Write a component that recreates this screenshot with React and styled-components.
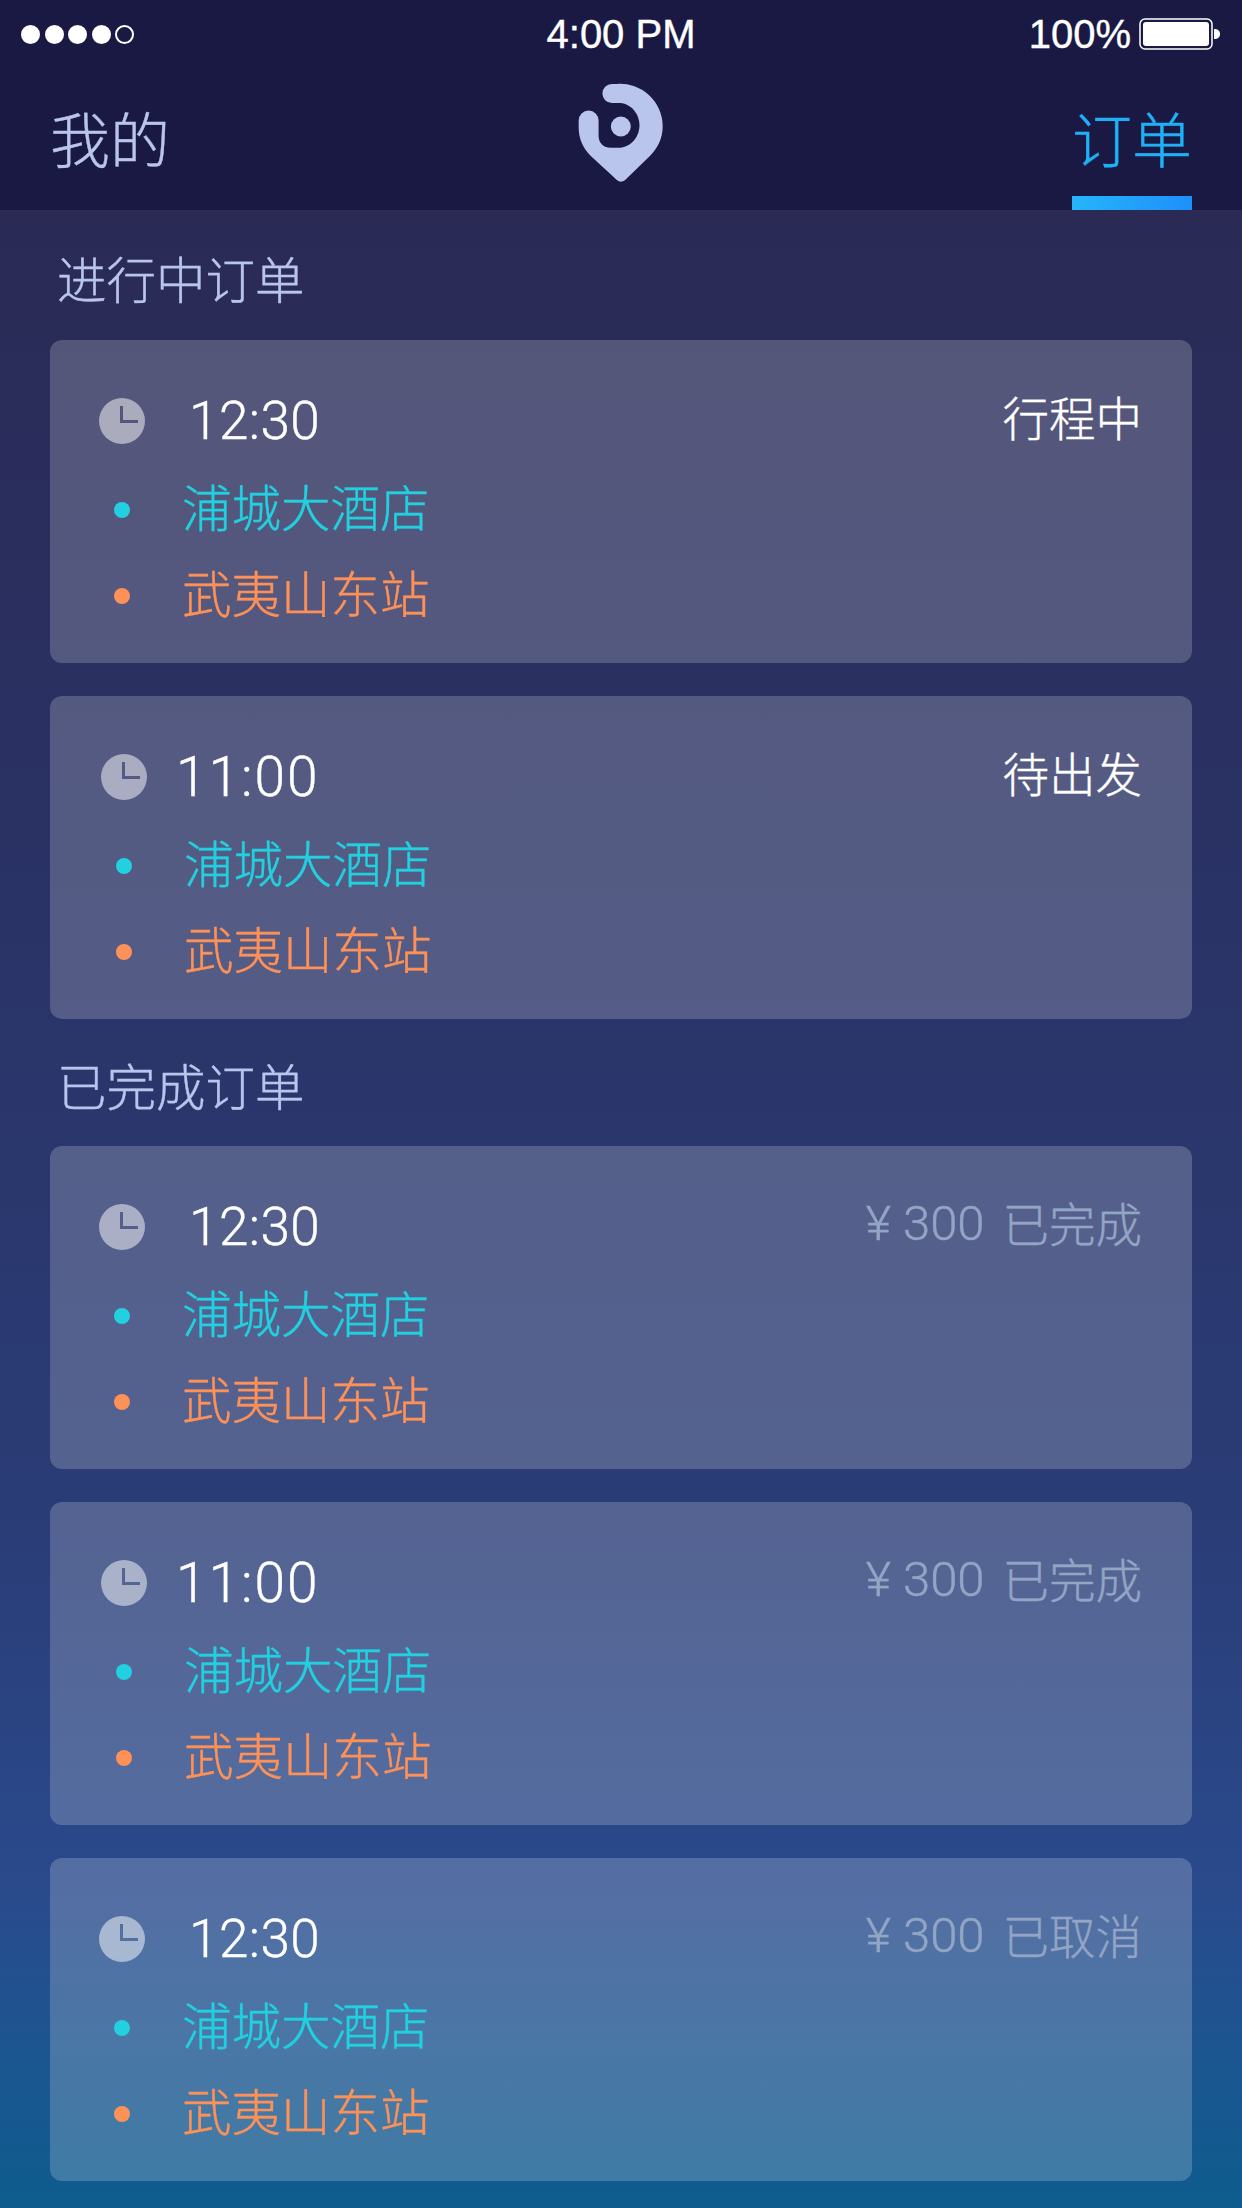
import React from 'react';
import styled, { createGlobalStyle } from 'styled-components';

const GlobalStyle = createGlobalStyle`
  html, body {
    margin: 0;
    padding: 0;
    background: #0f5a8e;
  }
`;

const Page = styled.div`
  width: 1242px;
  height: 2208px;
  overflow: hidden;
  display: flex;
  flex-direction: column;
  font-family: "Noto Sans CJK SC", sans-serif;
  font-weight: 300;
  -webkit-text-stroke: 0.4px;
  background: #1a1944;
`;

const Header = styled.header`
  height: 210px;
  flex: none;
  display: flex;
  flex-direction: column;
  background: #1a1944;
`;

const StatusBar = styled.div`
  height: 68px;
  flex: none;
  display: grid;
  grid-template-columns: 1fr auto 1fr;
  align-items: center;
  padding: 0 21px;
  color: #fff;
  font-family: "Liberation Sans", sans-serif;
  font-weight: 400;
  font-size: 40px;
`;

const Signal = styled.div`
  display: flex;
  gap: 4.5px;
`;

const SignalDot = styled.span`
  width: 19px;
  height: 19px;
  border-radius: 50%;
  box-sizing: border-box;
  border: 2px solid #fff;
  background: ${p => (p.$on ? '#fff' : 'transparent')};
`;

const BatteryWrap = styled.div`
  justify-self: end;
  display: flex;
  align-items: center;
  gap: 8px;
`;

const NavBar = styled.nav`
  flex: 1;
  display: flex;
  justify-content: space-between;
  padding: 0 50px;
`;

const NavItem = styled.div`
  width: 120px;
  height: 142px;
  box-sizing: border-box;
  display: flex;
  align-items: center;
  justify-content: center;
  padding-top: 8px;
  font-size: 60px;
  white-space: nowrap;
  color: ${p => (p.$active ? '#1fb0f5' : '#b9c5ec')};
  border-bottom: 14px solid transparent;
  border-image: ${p => (p.$active ? 'linear-gradient(90deg, #26b5fb, #1e8ffb) 1' : 'none')};
`;

const Logo = styled.svg`
  width: 88px;
  height: 102px;
  margin-top: 14px;
`;

const Content = styled.main`
  flex: 1;
  display: flex;
  flex-direction: column;
  padding: 0 50px;
  background: linear-gradient(180deg, #2a2a55 0%, #2a3366 35%, #2a3c76 65%, #2a4a8c 84%, #1c5590 92%, #0e5c8e 100%);
`;

const SectionTitle = styled.h2`
  margin: 0;
  height: ${p => (p.$first ? 130 : 127)}px;
  display: flex;
  align-items: center;
  padding: ${p => (p.$first ? 5 : 3)}px 7px 0;
  box-sizing: border-box;
  font-size: 49.5px;
  font-weight: 300;
  color: #b9c5ec;
`;

const CardList = styled.div`
  display: flex;
  flex-direction: column;
  gap: 33px;
`;

const Card = styled.article`
  height: 323px;
  box-sizing: border-box;
  border-radius: 12px;
  background: rgba(255, 255, 255, 0.2);
  padding: 56px 50px 0 ${p => 49 + p.$shift}px;
  display: flex;
  flex-direction: column;
`;

const TopRow = styled.div`
  display: flex;
  justify-content: space-between;
  height: 50px;
  align-items: center;
`;

const TimeGroup = styled.div`
  display: flex;
  align-items: center;
`;

const ClockIcon = styled.svg`
  width: 46px;
  height: 46px;
  flex: none;
`;

const TimeText = styled.span`
  margin-left: ${p => p.$gap}px;
  font-family: Roboto, sans-serif;
  font-weight: 300;
  font-size: ${p => p.$size}px;
  letter-spacing: ${p => p.$spacing}px;
  color: #fff;
`;

const Status = styled.span`
  display: flex;
  align-items: center;
  gap: 18px;
  font-size: 46.5px;
  color: ${p => (p.$muted ? '#93a5c4' : '#fff')};
  position: relative;
  top: -6px;
`;

const Price = styled.span`
  font-family: Roboto, sans-serif;
  font-weight: 300;
  font-size: 49px;
  position: relative;
  top: 2px;
`;

const Stop = styled.div`
  display: flex;
  align-items: center;
  height: 86px;
  font-size: 49.5px;
  color: ${p => p.$color};
  margin-top: ${p => p.$offset}px;
`;

const StopDot = styled.span`
  width: 16px;
  height: 16px;
  border-radius: 50%;
  margin: 0 52px 0 15px;
  background: ${p => p.$color};
`;

const StopLabel = styled.span`
  padding-bottom: 9px;
`;

const Clock = () => (
  <ClockIcon viewBox="0 0 46 46">
    <mask id="clock-hands">
      <rect width="46" height="46" fill="#fff" />
      <path d="M22.5 8 V23.5 H39" fill="none" stroke="#000" strokeWidth="3" />
    </mask>
    <circle cx="23" cy="23" r="23" fill="#fff" fillOpacity="0.5" mask="url(#clock-hands)" />
  </ClockIcon>
);

const Order = ({ time, price, status, muted, shift = 0, gap, size = 53, spacing = 0 }) => (
  <Card $shift={shift}>
    <TopRow>
      <TimeGroup>
        <Clock />
        <TimeText $gap={gap} $size={size} $spacing={spacing}>{time}</TimeText>
      </TimeGroup>
      <Status $muted={muted}>
        {price && <Price>{price}</Price>}
        <span>{status}</span>
      </Status>
    </TopRow>
    <Stop $color="#22d0e0" $offset={21}>
      <StopDot $color="#22d0e0" />
      <StopLabel>浦城大酒店</StopLabel>
    </Stop>
    <Stop $color="#fd9158" $offset={0}>
      <StopDot $color="#fd9158" />
      <StopLabel>武夷山东站</StopLabel>
    </Stop>
  </Card>
);

export default function App() {
  return (
    <Page>
      <GlobalStyle />
      <Header>
        <StatusBar>
          <Signal>
            <SignalDot $on />
            <SignalDot $on />
            <SignalDot $on />
            <SignalDot $on />
            <SignalDot />
          </Signal>
          <span>4:00 PM</span>
          <BatteryWrap>
            <span>100%</span>
            <svg width="82" height="32" viewBox="0 0 82 32">
              <rect x="1" y="1" width="72" height="30" rx="5" fill="none" stroke="#fff" strokeWidth="1.5" />
              <rect x="4" y="4" width="66" height="24" rx="3" fill="#fff" />
              <path d="M75 11 C79 11 81 13 81 16 C81 19 79 21 75 21 Z" fill="#fff" />
            </svg>
          </BatteryWrap>
        </StatusBar>
        <NavBar>
          <NavItem>我的</NavItem>
          <Logo viewBox="50 35 265 305">
            <path
              d="M168 40 A128 128 0 0 1 308 168 C308 205 292 235 268 258 L195 329 Q182 340 170 329 L90 255 C68 232 55 205 55 170 L55 150 A30 30 0 0 1 115 150 L115 195 C115 218 130 232 152 232 L182 232 A64 68 0 0 0 182 97 L155 97 A28.5 28.5 0 0 1 155 40 Z"
              fill="#b9c5ec"
            />
            <circle cx="182" cy="168" r="30" fill="#b9c5ec" />
          </Logo>
          <NavItem $active>订单</NavItem>
        </NavBar>
      </Header>
      <Content>
        <SectionTitle $first>进行中订单</SectionTitle>
        <CardList>
          <Order time="12:30" status="行程中" gap={44} spacing={0.5} />
          <Order time="11:00" status="待出发" shift={2} gap={29} size={55} spacing={2} />
        </CardList>
        <SectionTitle>已完成订单</SectionTitle>
        <CardList>
          <Order time="12:30" price="¥ 300" status="已完成" muted gap={44} spacing={0.5} />
          <Order time="11:00" price="¥ 300" status="已完成" muted shift={2} gap={29} size={55} spacing={2} />
          <Order time="12:30" price="¥ 300" status="已取消" muted gap={44} spacing={0.5} />
        </CardList>
      </Content>
    </Page>
  );
}
